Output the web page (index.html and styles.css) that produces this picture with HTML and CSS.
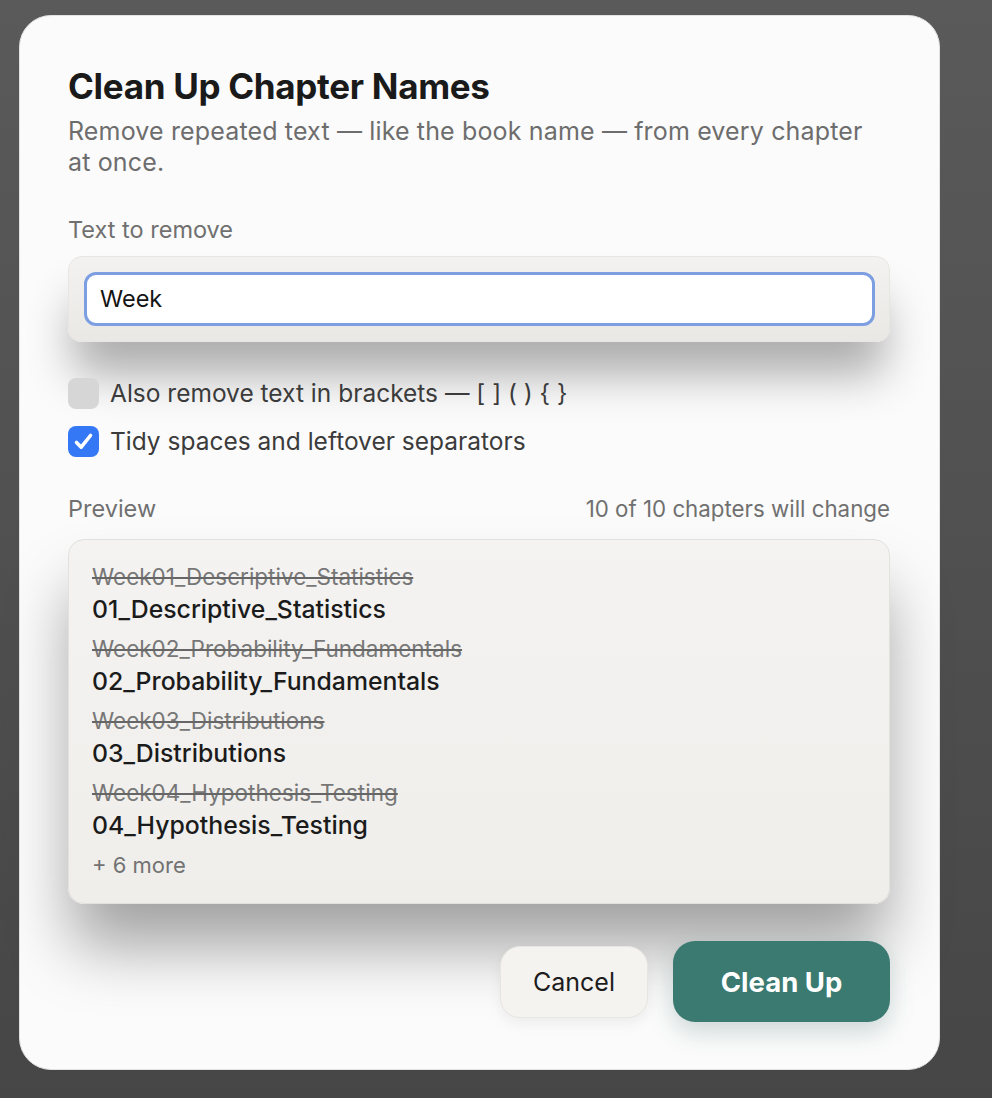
FILE: index.html
```html
<!DOCTYPE html>
<html lang="en">
<head>
<meta charset="utf-8">
<title>Clean Up Chapter Names</title>
<link rel="stylesheet" href="styles.css">
</head>
<body>
<div class="dialog">
  <h1 class="title">Clean Up Chapter Names</h1>
  <p class="subtitle">Remove repeated text — like the book name — from every chapter at once.</p>

  <div class="field-label">Text to remove</div>
  <div class="input-card">
    <div class="input">Week</div>
  </div>

  <div class="options">
    <div class="option">
      <span class="checkbox"></span>
      <span class="option-text">Also remove text in brackets — [ ] ( ) { }</span>
    </div>
    <div class="option">
      <span class="checkbox checked">
        <svg viewBox="0 0 31 31" width="31" height="31"><path d="M8.5 16.5 L13.2 21.2 L22.5 9.5" fill="none" stroke="#fff" stroke-width="3.6" stroke-linecap="round" stroke-linejoin="round"/></svg>
      </span>
      <span class="option-text">Tidy spaces and leftover separators</span>
    </div>
  </div>

  <div class="preview-head">
    <span>Preview</span>
    <span class="count">10 of 10 chapters will change</span>
  </div>
  <div class="preview">
    <div class="pair">
      <div class="old">Week01_Descriptive_Statistics</div>
      <div class="new">01_Descriptive_Statistics</div>
    </div>
    <div class="pair">
      <div class="old">Week02_Probability_Fundamentals</div>
      <div class="new">02_Probability_Fundamentals</div>
    </div>
    <div class="pair">
      <div class="old">Week03_Distributions</div>
      <div class="new">03_Distributions</div>
    </div>
    <div class="pair">
      <div class="old">Week04_Hypothesis_Testing</div>
      <div class="new">04_Hypothesis_Testing</div>
    </div>
    <div class="more">+ 6 more</div>
  </div>

  <div class="actions">
    <button class="btn btn-cancel">Cancel</button>
    <button class="btn btn-primary">Clean Up</button>
  </div>
</div>
</body>
</html>
```

FILE: styles.css
```css
html, body {
  margin: 0;
  padding: 0;
}
body {
  width: 992px;
  height: 1098px;
  background: linear-gradient(180deg, #5a5a5a 0%, #4e4e4e 60%, #464646 100%);
  font-family: Inter, "Noto Sans", "Liberation Sans", sans-serif;
  padding: 15px 0 0 19px;
  box-sizing: border-box;
  overflow: hidden;
}
.dialog {
  width: 921px;
  box-sizing: border-box;
  background: #fbfbfb;
  border: 1px solid #e2e2e2;
  border-radius: 32px;
  padding: 50px 49px 47px 48px;
  display: flex;
  flex-direction: column;
}
.title {
  margin: 0;
  font-size: 35px;
  line-height: 40px;
  font-weight: 700;
  color: #1a1a1a;
  letter-spacing: -0.3px;
}
.subtitle {
  margin: 10px 0 0;
  font-size: 25px;
  line-height: 31px;
  letter-spacing: 0.15px;
  color: #6d6d6d;
  padding-right: 10px;
}
.field-label {
  margin-top: 37px;
  font-size: 23.5px;
  line-height: 30px;
  color: #707070;
}
.input-card {
  margin-top: 11px;
  background: linear-gradient(180deg, #f3f2f0 0%, #e9e8e5 100%);
  border: 1px solid #e7e6e3;
  border-radius: 14px;
  padding: 15px 14px 15px 15px;
  box-shadow: 0 38px 46px -6px rgba(0, 0, 0, 0.32);
}
.input {
  height: 54px;
  box-sizing: border-box;
  background: #fff;
  border: 3px solid #7d9fe2;
  border-radius: 12px;
  padding: 0 13px;
  font-size: 23.5px;
  line-height: 48px;
  color: #141414;
}
.options {
  margin-top: 35px;
  display: flex;
  flex-direction: column;
  gap: 16px;
}
.option {
  display: flex;
  align-items: center;
  gap: 11px;
  height: 32px;
}
.checkbox {
  width: 31px;
  height: 31px;
  border-radius: 8px;
  background: #d6d6d6;
  display: flex;
  align-items: center;
  justify-content: center;
  flex: none;
}
.checkbox.checked {
  background: #3478f6;
}
.option-text {
  font-size: 24.5px;
  color: #3b3b3b;
}
.preview-head {
  margin-top: 37px;
  display: flex;
  justify-content: space-between;
  align-items: center;
  font-size: 23.5px;
  line-height: 30px;
  color: #707070;
}
.count {
  font-size: 22.3px;
}
.preview {
  margin-top: 15px;
  background: linear-gradient(180deg, #f4f3f1 0%, #efeeeb 100%);
  border: 1px solid #e2e1de;
  border-radius: 16px;
  padding: 23px 24px 24px 23px;
  display: flex;
  flex-direction: column;
  gap: 10px;
  box-shadow: 0 46px 64px -4px rgba(0, 0, 0, 0.36);
}
.pair {
  display: flex;
  flex-direction: column;
  gap: 2px;
}
.old {
  font-size: 22.5px;
  line-height: 28px;
  color: #777;
  text-decoration: line-through;
  text-decoration-color: #666;
  text-decoration-thickness: 1.5px;
}
.new {
  font-size: 24.8px;
  line-height: 32px;
  font-weight: 500;
  color: #1b1b1b;
}
.more {
  font-size: 22px;
  line-height: 28px;
  color: #727272;
}
.actions {
  margin-top: 37px;
  display: flex;
  justify-content: flex-end;
  align-items: center;
  gap: 25px;
}
.btn {
  font-family: inherit;
  border: none;
  cursor: pointer;
}
.btn-cancel {
  width: 148px;
  height: 72px;
  border-radius: 20px;
  background: #f4f3f0;
  border: 1px solid #e6e5e1;
  font-size: 25px;
  color: #1c1c1c;
  box-shadow: 0 6px 14px rgba(0, 0, 0, 0.06);
}
.btn-primary {
  width: 217px;
  height: 81px;
  border-radius: 22px;
  background: #3a7a71;
  color: #fff;
  font-size: 27.5px;
  font-weight: 700;
  box-shadow: 0 10px 24px rgba(40, 90, 85, 0.22);
}
```
